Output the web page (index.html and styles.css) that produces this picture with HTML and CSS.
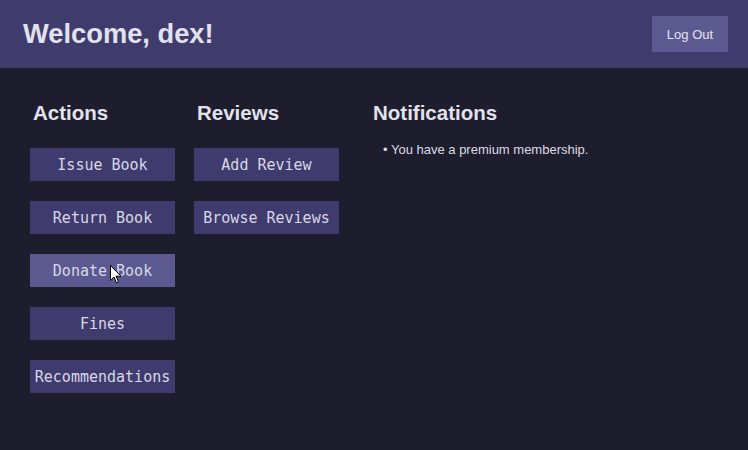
FILE: index.html
```html
<!DOCTYPE html>
<html>
<head>
<meta charset="utf-8">
<link rel="stylesheet" href="styles.css">
</head>
<body>
<header class="topbar">
  <h1 class="welcome">Welcome, dex!</h1>
  <button class="logout">Log Out</button>
</header>
<main class="content">
  <section class="col col-actions">
    <h2 class="col-title">Actions</h2>
    <div class="btn-list">
      <button class="action">Issue Book</button>
      <button class="action">Return Book</button>
      <button class="action is-hover">Donate Book</button>
      <button class="action">Fines</button>
      <button class="action">Recommendations</button>
    </div>
  </section>
  <section class="col col-reviews">
    <h2 class="col-title">Reviews</h2>
    <div class="btn-list">
      <button class="action">Add Review</button>
      <button class="action">Browse Reviews</button>
    </div>
  </section>
  <section class="col col-notes">
    <h2 class="col-title">Notifications</h2>
    <ul class="notes">
      <li>You have a premium membership.</li>
    </ul>
  </section>
  <svg class="cursor" width="12" height="19" viewBox="0 0 12 19"><path d="M0.5 0.5 L0.5 15.5 L4 12 L6.5 18 L8.5 17 L6 11.2 L11 11.2 Z" fill="#fff" stroke="#000" stroke-width="1"/></svg>
</main>
</body>
</html>
```
FILE: styles.css
```css
html, body {
  margin: 0;
  padding: 0;
}
body {
  background: #1e1d2d;
  width: 748px;
  height: 450px;
  overflow: hidden;
  font-family: "Liberation Sans", Arial, sans-serif;
  color: #dcdce8;
}
.topbar {
  height: 68px;
  background: #3f3b6c;
  display: flex;
  align-items: center;
  justify-content: space-between;
  padding: 0 20px 0 23px;
  box-sizing: border-box;
}
.welcome {
  margin: 0;
  font-size: 27.3px;
  font-weight: bold;
  color: #e2e2ec;
  line-height: 32px;
}
.logout {
  width: 76px;
  height: 36px;
  border: none;
  background: #5c5990;
  color: #e4e4f0;
  font-family: "Liberation Sans", Arial, sans-serif;
  font-size: 13px;
  padding: 0;
}
.content {
  position: relative;
  display: flex;
  padding: 33px 0 0 30px;
}
.col-actions { width: 145px; }
.col-reviews { width: 145px; margin-left: 19px; }
.col-notes { margin-left: 32px; }
.col-title {
  margin: 0 0 24px 0;
  padding-left: 3px;
  font-size: 20.5px;
  line-height: 23px;
  font-weight: bold;
  color: #e2e2ec;
}
.col-notes .col-title {
  margin-bottom: 18px;
  padding-left: 2px;
}
.btn-list {
  display: flex;
  flex-direction: column;
  gap: 20px;
}
.action {
  width: 145px;
  height: 33px;
  border: none;
  background: #403b6e;
  color: #d8d8e6;
  font-family: "DejaVu Sans Mono", monospace;
  font-size: 15px;
  padding: 1px 0 0 0;
}
.action.is-hover {
  background: #5c5990;
}
.notes {
  list-style: none;
  margin: 0;
  padding: 0 0 0 12px;
  font-size: 13px;
  line-height: 15px;
  color: #dcdce8;
}
.notes li::before {
  content: "\2022  ";
  white-space: pre;
}
.cursor {
  position: absolute;
  left: 110px;
  top: 197px;
}
```
